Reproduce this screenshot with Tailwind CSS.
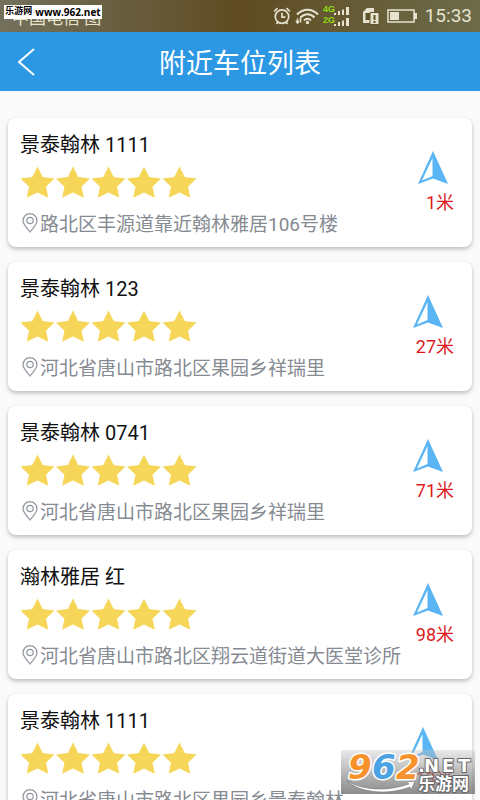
<!DOCTYPE html>
<html lang="zh-CN">
<head>
<meta charset="utf-8">
<meta name="viewport" content="width=device-width, initial-scale=1">
<title>附近车位列表</title>
<script src="https://cdn.jsdelivr.net/npm/@tailwindcss/browser@4"></script>
</head>
<body class="relative flex h-screen flex-col overflow-hidden bg-[#fafafa] font-[Roboto,'Noto_Sans_CJK_SC',sans-serif]">

<svg class="hidden">
  <symbol id="star" viewBox="0 0 34 32"><path fill="#f5d658" d="M17 .5l5.200 10.500 11.800 1.500-8.500 8.200 2.300 11L17 26.500 6.200 31.700l2.300-11L0 12.500 11.800 11z"/></symbol>
  <symbol id="pin" viewBox="0 0 16 20"><path fill="none" stroke="#92969e" stroke-width="1.200" d="M8 19C5.500 15.500 1 11.500 1 7.700a7 7 0 0 1 14 0C15 11.500 10.500 15.500 8 19z"/><circle cx="8" cy="7.500" r="3.200" fill="none" stroke="#92969e" stroke-width="1.200"/></symbol>
  <symbol id="nav" viewBox="0 0 30 34"><path fill="#5ab5f5" d="M15 0l15 33-15-5.500L0 33z"/><path fill="#fff" d="M14.500 7v18L4 29.500z"/></symbol>
</svg>

<header class="shrink-0">
  <div class="flex h-8 items-center justify-between bg-linear-to-r from-[#73715c] via-[#5f4b21] to-[#6c6c4a] pr-2 pl-3 text-[#e6e2d0]">
    <span class="pt-1 text-[17px] leading-7">中国电信 图</span>
    <div class="flex items-center gap-1">
      <svg class="size-[18px]" viewBox="0 0 16 16" fill="none" stroke="currentColor" stroke-width="1.500"><circle cx="8" cy="8.500" r="6"/><path d="M8 5v4h3M1 4l3-3M15 4l-3-3M3 15l1.500-1.500M13 15l-1.500-1.500"/></svg>
      <svg class="h-4 w-6" viewBox="0 0 24 16" fill="none" stroke="currentColor" stroke-width="2"><path d="M2 6.500c6-6.500 15-6.500 21 0M5.500 9.500c4-4.500 10-4.500 14 0M9 12.500c2-2.500 5-2.500 7 0"/><circle cx="12.500" cy="14.500" r=".7"/><path stroke-width="1.500" d="M2.500 10.500v5M5.500 9.500v5M1 13l1.500 2L4 13"/></svg>
      <svg class="h-6 w-7" viewBox="0 0 28 24" fill="currentColor"><g fill="#8ede12" font-family="Liberation Sans" font-weight="700" font-size="9"><text x="0" y="8">4G</text><text x="0" y="19">2G</text></g><path d="M11 9h2v2h-2zM15 7h2v4h-2zM19 5.500h2V11h-2zM23 3h3v8h-3zM11 20h2v2h-2zM15 18h2v4h-2zM19 16.500h2V22h-2zM23 14h3v8h-3z"/></svg>
      <svg class="ml-2 h-[18px] w-4" viewBox="0 0 16 18"><path fill="currentColor" d="M0 5l4-4h7v15H0z"/><path fill="#615329" d="M2.500 6h7v7h-7z"/><path fill="currentColor" stroke="#615329" d="M7 5.500h9V17.500H7z"/><path fill="#615329" d="M10.500 8h2v5h-2zM10.500 14h2v2h-2z"/></svg>
      <svg class="ml-1 h-[14px] w-[30px]" viewBox="0 0 30 14"><path fill="none" stroke="currentColor" stroke-width="1.500" d="M1 1h26v12H1z"/><path fill="currentColor" d="M3 3h9v8H3zM27 4h3v6h-3z"/></svg>
      <time class="ml-1 text-[19px] leading-8">15:33</time>
    </div>
  </div>
  <div class="grid h-[59px] grid-cols-[1fr_auto_1fr] items-center bg-[#2c97e3] text-white">
    <button type="button" aria-label="返回" class="ml-4 flex h-11 w-6 items-center"><svg class="h-7 w-5" viewBox="0 0 20 28" fill="none" stroke="currentColor" stroke-width="2"><path d="M18 1L3 14l15 13"/></svg></button>
    <h1 class="pt-1 text-[27px] leading-10">附近车位列表</h1>
  </div>
</header>

<main class="flex-1 overflow-hidden px-2 pt-[27px]">
  <ul id="list" class="flex flex-col gap-[15px]"></ul>
</main>

<div class="absolute top-[5px] left-1 flex h-[14px] w-[98px] items-center justify-center gap-[3px] bg-white font-bold whitespace-nowrap text-black">
  <span class="text-[9px]">乐游网</span><span class="font-['Open_Sans',sans-serif] text-[10px]">www.962.net</span>
</div>

<div class="absolute right-[5px] bottom-[6px]">
  <svg class="h-11 w-[134px] bg-linear-to-b from-[#c8c8c8]/40 to-[#777]/85" viewBox="0 0 134 44" overflow="visible">
    <g font-weight="700" stroke-linejoin="round" paint-order="stroke">
      <text y="29" font-family="DejaVu Sans" font-style="italic" font-size="34" stroke="#fff" stroke-width="3"><tspan x="7" fill="#f7922d">9</tspan><tspan x="31" fill="#4ba3e3">6</tspan><tspan x="55" fill="#f7922d">2</tspan></text>
      <g fill="#fff" stroke="#666" stroke-width="2">
        <text x="77" y="22" font-family="DejaVu Sans" font-size="18">.</text>
        <text font-family="DejaVu Sans" font-size="18" y="22"><tspan x="83">N</tspan><tspan x="101">E</tspan><tspan x="117">T</tspan></text>
        <text x="77" y="40" font-family="Noto Sans CJK SC" font-size="17">乐游网</text>
      </g>
    </g>
    <path fill="#fff" stroke="#666" stroke-width=".5" d="M6 31c15 9 40 11 62 3l-3-2 9-1-4 9-1-3C45 46 18 42 6 31z"/>
  </svg>
</div>

<template id="card">
  <li class="flex h-[129px] justify-between rounded-lg bg-white pt-[13px] pr-[18px] pl-3 shadow-[0_2px_4px_rgba(0,0,0,0.25)]">
    <div class="flex flex-col">
      <h2 class="text-xl leading-7 text-[#111]"></h2>
      <div class="mt-[7px] flex gap-px" role="img" aria-label="五星">
        <svg class="h-8 w-[35px]"><use href="#star"/></svg><svg class="h-8 w-[34px]"><use href="#star"/></svg><svg class="h-8 w-[35px]"><use href="#star"/></svg><svg class="h-8 w-[34px]"><use href="#star"/></svg><svg class="h-8 w-[35px]"><use href="#star"/></svg>
      </div>
      <p class="mt-3 flex items-start gap-0.5 pt-px text-[19px] leading-7 whitespace-nowrap text-[#868a92]"><svg class="mt-0.5 ml-0.5 h-5 w-4"><use href="#pin"/></svg><span></span></p>
    </div>
    <a href="#" class="flex flex-col items-center pt-5">
      <svg class="h-[34px] w-[30px]"><use href="#nav"/></svg>
      <span class="mt-1.5 pl-[13px] text-lg leading-6 text-[#dc1a1e]"></span>
    </a>
  </li>
</template>

<script>
const spots = [
  ['景泰翰林 1111', '路北区丰源道靠近翰林雅居106号楼', '1米'],
  ['景泰翰林 123', '河北省唐山市路北区果园乡祥瑞里', '27米'],
  ['景泰翰林 0741', '河北省唐山市路北区果园乡祥瑞里', '71米'],
  ['瀚林雅居 红', '河北省唐山市路北区翔云道街道大医堂诊所', '98米'],
  ['景泰翰林 1111', '河北省唐山市路北区果园乡景泰翰林', '113米']
];
const card = document.getElementById('card');
for (const [name, address, distance] of spots) {
  const item = card.content.cloneNode(true);
  item.querySelector('h2').textContent = name;
  item.querySelector('p span').textContent = address;
  item.querySelector('a span').textContent = distance;
  document.getElementById('list').append(item);
}
</script>
</body>
</html>
